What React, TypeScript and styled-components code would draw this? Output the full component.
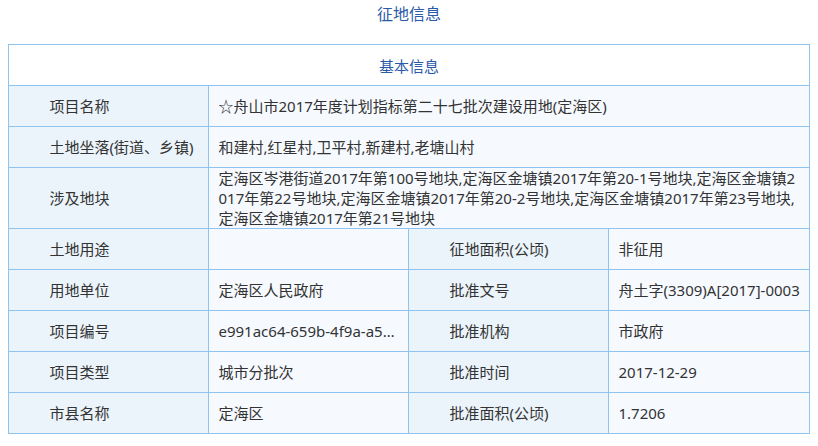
import React from "react";
import styled, { createGlobalStyle } from "styled-components";

const Global = createGlobalStyle`
  html, body { margin: 0; padding: 0; background: #fff; }
  body { font-family: "Segoe UI", "Noto Sans", "Noto Sans CJK SC", sans-serif; }
`;

const Page = styled.div`
  width: 818px;
`;

const Title = styled.h2`
  margin: 0 0 16px;
  height: 28px;
  line-height: 28px;
  text-align: center;
  font-size: 16px;
  font-weight: normal;
  color: #2b5aa8;
`;

const Table = styled.table`
  width: 800px;
  margin: 0 auto;
  border-collapse: collapse;
  table-layout: fixed;
  font-size: 15px;
  color: #333;
`;

const HeadCell = styled.th`
  height: 40px;
  padding: 0;
  border: 1px solid #8fc4f0;
  background: #fff;
  color: #2b5aa8;
  font-weight: normal;
  font-size: 15px;
  text-align: center;
`;

const Label = styled.td`
  height: 40px;
  padding: 0 8px 0 40px;
  border: 1px solid #8fc4f0;
  background: #ebf3fb;
  line-height: 20px;
  white-space: nowrap;
`;

const Value = styled.td<{ $clip?: boolean }>`
  height: 40px;
  padding: 0 5px 0 9px;
  border: 1px solid #8fc4f0;
  background: #f6faff;
  line-height: 20px;
  word-break: break-all;
  ${(p) =>
    p.$clip &&
    `padding-right: 12px; white-space: nowrap; overflow: hidden; text-overflow: ellipsis;`}
`;

type Pair = [string, string, boolean?];

const pairs: [Pair, Pair][] = [
  [["土地用途", ""], ["征地面积(公顷)", "非征用"]],
  [["用地单位", "定海区人民政府"], ["批准文号", "舟土字(3309)A[2017]-0003"]],
  [["项目编号", "e991ac64-659b-4f9a-a5c3-7f1e2d8b9a01", true], ["批准机构", "市政府"]],
  [["项目类型", "城市分批次"], ["批准时间", "2017-12-29"]],
  [["市县名称", "定海区"], ["批准面积(公顷)", "1.7206"]],
];

export default function App() {
  return (
    <Page>
      <Global />
      <Title>征地信息</Title>
      <Table>
        <colgroup>
          <col style={{ width: 200 }} />
          <col style={{ width: 200 }} />
          <col style={{ width: 200 }} />
          <col style={{ width: 200 }} />
        </colgroup>
        <tbody>
          <tr>
            <HeadCell colSpan={4}>基本信息</HeadCell>
          </tr>
          <tr>
            <Label>项目名称</Label>
            <Value colSpan={3}>☆舟山市2017年度计划指标第二十七批次建设用地(定海区)</Value>
          </tr>
          <tr>
            <Label>土地坐落(街道、乡镇)</Label>
            <Value colSpan={3}>和建村,红星村,卫平村,新建村,老塘山村</Value>
          </tr>
          <tr>
            <Label>涉及地块</Label>
            <Value colSpan={3}>
              定海区岑港街道2017年第100号地块,定海区金塘镇2017年第20-1号地块,定海区金塘镇2017年第22号地块,定海区金塘镇2017年第20-2号地块,定海区金塘镇2017年第23号地块,定海区金塘镇2017年第21号地块
            </Value>
          </tr>
          {pairs.map(([a, b], i) => (
            <tr key={i}>
              <Label>{a[0]}</Label>
              <Value $clip={a[2]}>{a[1]}</Value>
              <Label>{b[0]}</Label>
              <Value $clip={b[2]}>{b[1]}</Value>
            </tr>
          ))}
        </tbody>
      </Table>
    </Page>
  );
}
